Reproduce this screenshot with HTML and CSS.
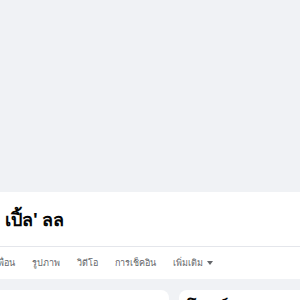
FILE: index.html
```html
<!DOCTYPE html>
<html lang="th">
<head>
    <meta charset="UTF-8">
    <meta name="viewport" content="width=device-width, initial-scale=1.0">
    <title>เปิ้ล' ลล</title>
    <link rel="stylesheet" href="styles.css">
</head>
<body>
<div class="cover"></div>
<div class="profile-head">
    <div class="name-row">
        <h1 class="name">เปิ้ล' ลล</h1>
    </div>
    <div class="tabs">
        <a class="tab">เพื่อน</a>
        <a class="tab">รูปภาพ</a>
        <a class="tab">วิดีโอ</a>
        <a class="tab">การเช็คอิน</a>
        <a class="tab">เพิ่มเติม <span class="caret"></span></a>
    </div>
</div>
<div class="content">
    <div class="card intro"></div>
    <div class="card posts">
        <h2 class="card-title">โพสต์</h2>
    </div>
</div>
</body>
</html>
```

FILE: styles.css
```css
body {
    margin: 0;
    background-color: #f0f2f5;
    font-family: "Noto Sans", "Liberation Sans", sans-serif;
    overflow: hidden;
}
.cover {
    height: 192px;
}
.profile-head {
    background-color: #fff;
}
.name-row {
    height: 54px;
    display: flex;
    align-items: center;
    padding-left: 5px;
    border-bottom: 1px solid #e4e6eb;
}
.name {
    margin: 0;
    font-size: 18px;
    font-weight: 700;
    color: #050505;
}
.tabs {
    height: 32px;
    display: flex;
    align-items: center;
    gap: 17px;
    margin-left: -5px;
}
.tab {
    font-size: 9px;
    font-weight: 400;
    color: #65676b;
    white-space: nowrap;
    display: flex;
    align-items: center;
    gap: 4px;
}
.caret {
    width: 0;
    height: 0;
    border-left: 3px solid transparent;
    border-right: 3px solid transparent;
    border-top: 4px solid #65676b;
}
.content {
    display: flex;
    gap: 10px;
    margin-top: 11px;
    margin-left: -20px;
}
.card {
    background-color: #fff;
    border-radius: 8px;
    height: 200px;
}
.intro {
    width: 189px;
    flex-shrink: 0;
}
.posts {
    width: 200px;
    flex-shrink: 0;
    padding: 5px 8px;
}
.card-title {
    margin: 0;
    font-size: 17px;
    line-height: 24px;
    font-weight: 700;
    color: #050505;
}
```
